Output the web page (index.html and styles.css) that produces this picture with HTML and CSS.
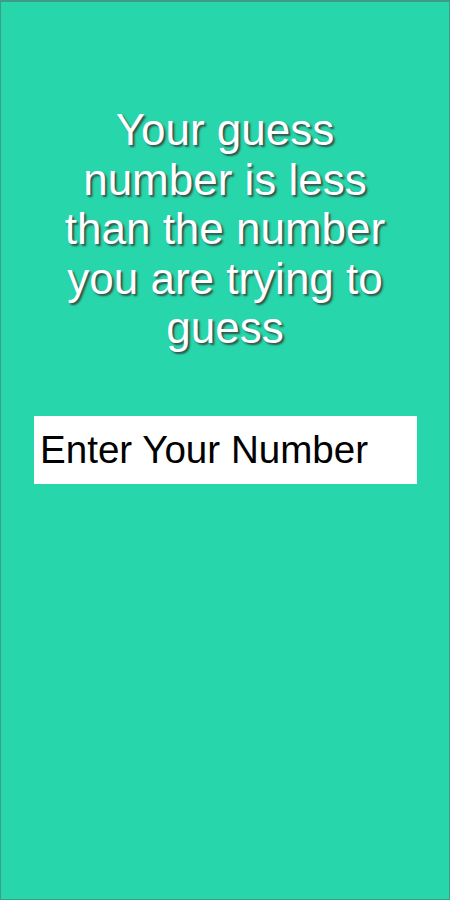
FILE: index.html
```html
<!DOCTYPE html>
<html lang="en">
<head>
<meta charset="utf-8">
<title>Guess</title>
<link rel="stylesheet" href="styles.css">
</head>
<body>
<main class="screen">
  <h1 class="message">Your guess number is less than the number you are trying to guess</h1>
  <div class="field">
    <input class="number-input" type="text" placeholder="Enter Your Number">
  </div>
</main>
</body>
</html>
```
FILE: styles.css
```css
* { box-sizing: border-box; }
html, body {
  margin: 0;
  padding: 0;
  width: 450px;
  height: 900px;
}
body {
  font-family: "Liberation Sans", Arial, sans-serif;
  background: #27d6aa;
}
.screen {
  width: 450px;
  height: 900px;
  background: #27d6aa;
  border: 1px solid #3c9c85;
  border-top-width: 2px;
  display: flex;
  flex-direction: column;
  align-items: stretch;
  padding-top: 103px;
}
.message {
  margin: 0;
  padding: 0 40px;
  font-size: 44px;
  line-height: 49.5px;
  font-weight: normal;
  color: #ffffff;
  text-align: center;
  text-shadow: 2px 2px 2px #34514a;
}
.field {
  margin-top: 63.5px;
  padding: 0 32px 0 33px;
}
.number-input {
  display: block;
  width: 100%;
  height: 68px;
  border: none;
  outline: none;
  background: #ffffff;
  padding: 0 0 0 6px;
  font-family: "Liberation Sans", Arial, sans-serif;
  font-size: 38.6px;
  color: #000000;
}
.number-input::placeholder {
  color: #000000;
  opacity: 1;
}
```
